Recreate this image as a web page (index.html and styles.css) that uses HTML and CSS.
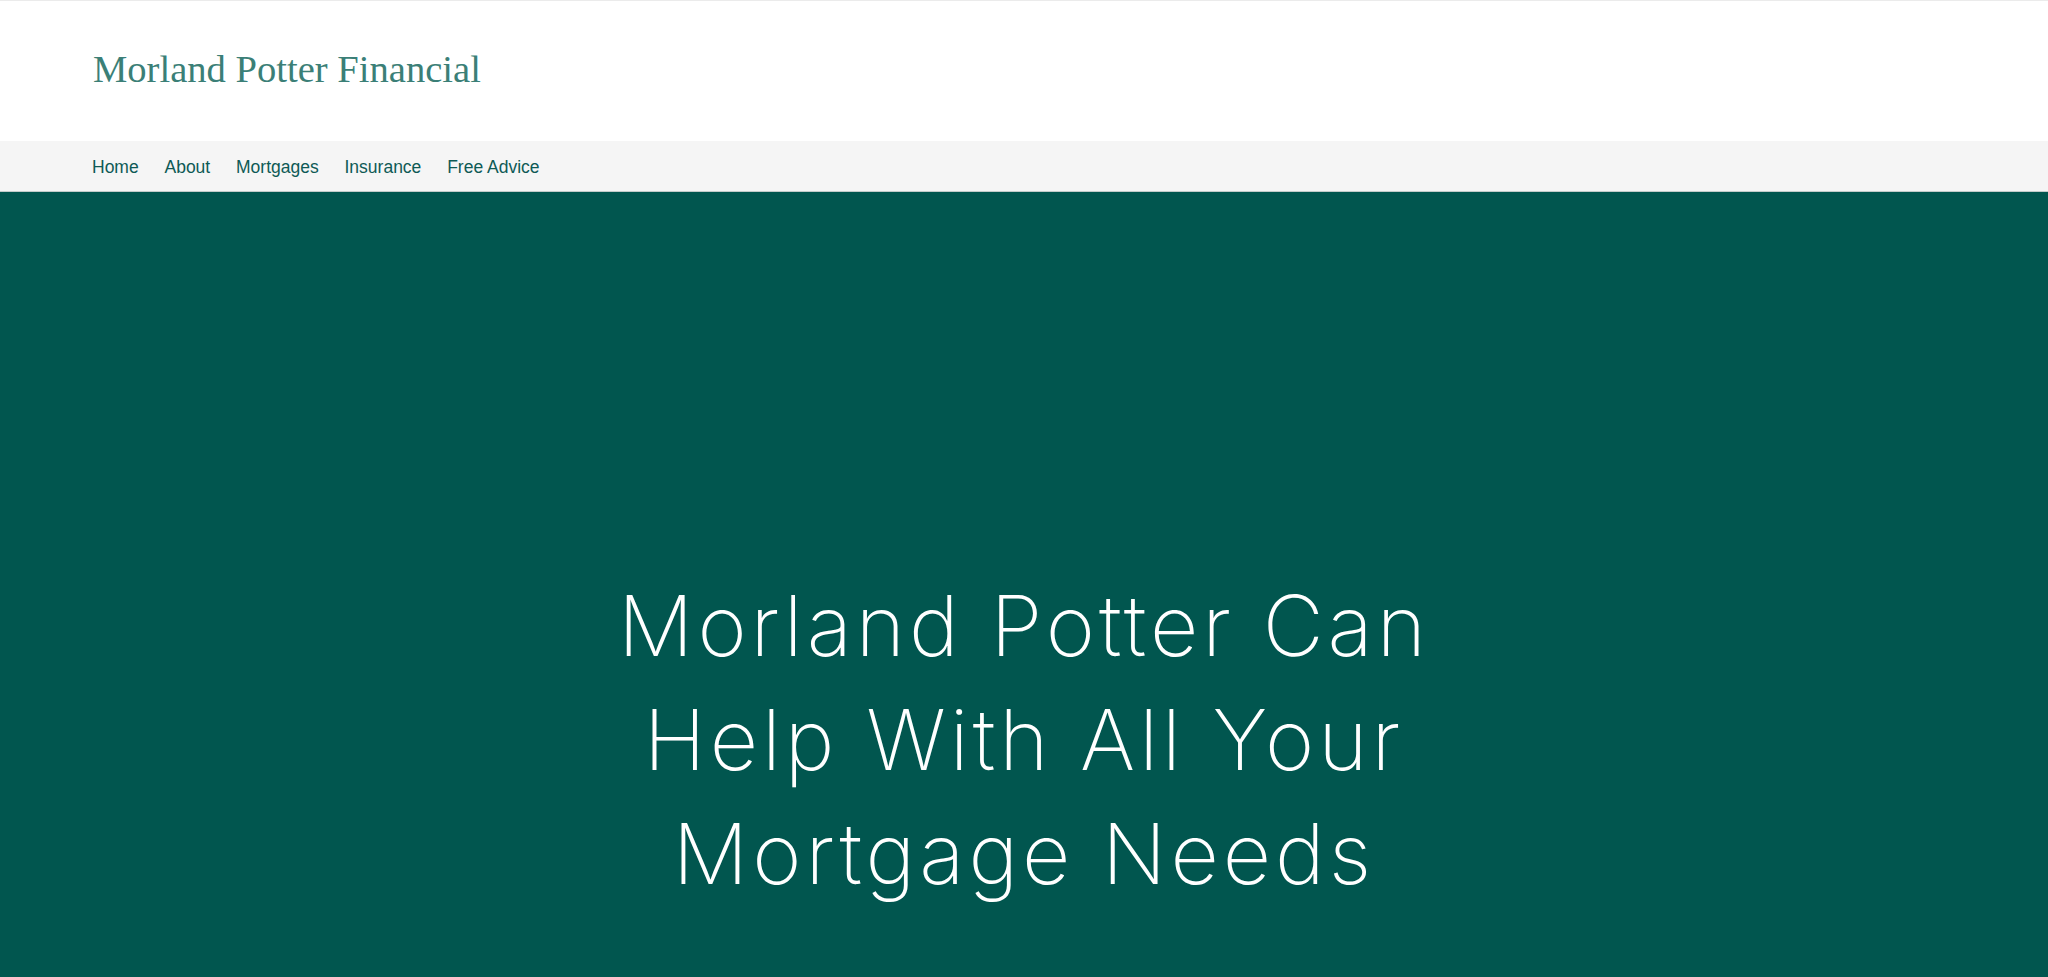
FILE: index.html
```html
<!DOCTYPE html>
<html lang="en">
<head>
<meta charset="utf-8">
<title>Morland Potter Financial</title>
<link rel="stylesheet" href="styles.css">
</head>
<body>
<header class="site-header">
  <div class="brand">Morland Potter Financial</div>
</header>
<nav class="site-nav">
  <a class="nav-link" href="#">Home</a>
  <a class="nav-link" href="#">About</a>
  <a class="nav-link" href="#">Mortgages</a>
  <a class="nav-link" href="#">Insurance</a>
  <a class="nav-link" href="#">Free Advice</a>
</nav>
<section class="hero">
  <h1 class="hero-title">Morland Potter Can<br>Help With All Your<br>Mortgage Needs</h1>
</section>
</body>
</html>
```
FILE: styles.css
```css
html, body {
  margin: 0;
  padding: 0;
  background: #ffffff;
}
body {
  font-family: "Liberation Sans", Arial, sans-serif;
  overflow: hidden;
}
.site-header {
  box-sizing: border-box;
  height: 141px;
  border-top: 1px solid #ebebeb;
  padding: 46px 0 0 93px;
}
.brand {
  font-family: "Liberation Serif", "Times New Roman", serif;
  font-size: 38.6px;
  line-height: 44px;
  color: #3b7f77;
}
.site-nav {
  box-sizing: border-box;
  height: 51px;
  background: #f5f5f5;
  border-bottom: 1px solid #c3cbca;
  display: flex;
  align-items: center;
  gap: 25.8px;
  padding-left: 92px;
}
.nav-link {
  font-size: 17.5px;
  line-height: 50px;
  padding-top: 1px;
  color: #0e5a55;
  text-decoration: none;
}
.hero {
  background: #01564f;
  height: 786px;
  padding-top: 1px;
  box-sizing: border-box;
  text-align: center;
}
.hero-title {
  margin: 376px 0 0;
  font-family: Inter, "Liberation Sans", sans-serif;
  font-weight: 200;
  font-size: 84px;
  line-height: 114px;
  letter-spacing: 4px;
  color: #ffffff;
}
```
